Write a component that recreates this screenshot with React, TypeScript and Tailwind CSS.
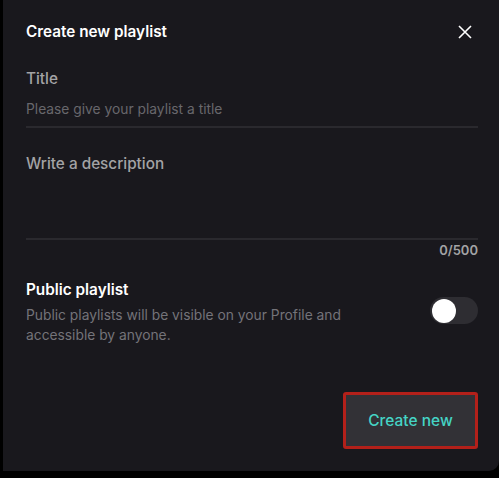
import React from "react";

export default function App() {
  return (
    <div className="w-[499px] h-[478px] bg-black overflow-hidden" style={{ fontFamily: "Inter, 'Noto Sans', sans-serif" }}>
      <div className="ml-[3px] w-[496px] h-[471px] bg-[#19181d] rounded-br-[10px] pl-[23px] pr-[21px] flex flex-col">
        <div className="h-[63px] flex items-center justify-between">
          <div className="text-[15.3px] font-semibold text-white leading-[20px]">Create new playlist</div>
          <svg width="14" height="14" viewBox="0 0 14 14" className="mr-[6px]">
            <path d="M1 1L13 13M13 1L1 13" stroke="white" strokeWidth="1.6" />
          </svg>
        </div>
        <div className="mt-[6px] text-[15.3px] leading-[20px] font-medium text-[#a3a3a5]">Title</div>
        <div className="mt-[11px] text-[13.8px] leading-[18px] text-[#68676c] pb-[8px] border-b-2 border-[#2a292e]">
          Please give your playlist a title
        </div>
        <div className="mt-[26px] h-[86px] text-[15.3px] leading-[20px] font-medium text-[#a3a3a5] border-b-2 border-[#2a292e]">
          Write a description
        </div>
        <div className="mt-[1px] text-right text-[13px] leading-[18px] font-semibold text-[#a3a3a5]">0/500</div>
        <div className="mt-[21px] flex items-start justify-between">
          <div>
            <div className="text-[15.3px] leading-[20px] font-semibold text-white">Public playlist</div>
            <div className="mt-[5px] text-[13.8px] leading-[20px] text-[#747379] w-[340px]">
              Public playlists will be visible on your Profile and accessible by anyone.
            </div>
          </div>
          <div className="mt-[17px] w-[48px] h-[27px] rounded-full bg-[#2e2d32] flex items-center pl-[2px]">
            <div className="w-[24px] h-[24px] rounded-full bg-white" />
          </div>
        </div>
        <div className="mt-auto mb-[22px] flex justify-end">
          <button className="w-[135px] h-[57px] border-[3px] border-[#b3201a] rounded-[3px] bg-[#323136] text-[15.5px] font-medium text-[#45d4c5]">
            Create new
          </button>
        </div>
      </div>
    </div>
  );
}
